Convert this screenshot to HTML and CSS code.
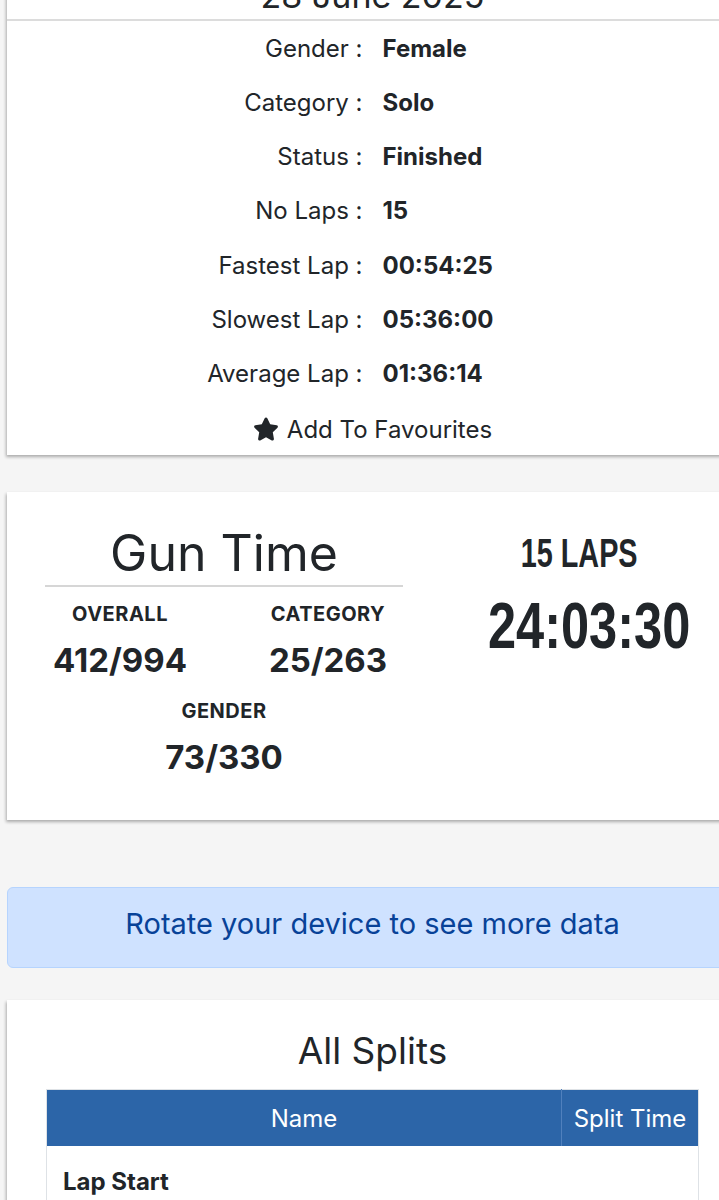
FILE: index.html
```html
<!DOCTYPE html>
<html lang="en">
<head>
<meta charset="utf-8">
<title>Result</title>
<link rel="stylesheet" href="styles.css">
</head>
<body>
<div class="page">
  <section class="card card-info">
    <h2 class="date">28 June 2025</h2>
    <div class="info-row"><span class="label">Gender :</span><span class="value">Female</span></div>
    <div class="info-row"><span class="label">Category :</span><span class="value">Solo</span></div>
    <div class="info-row"><span class="label">Status :</span><span class="value">Finished</span></div>
    <div class="info-row"><span class="label">No Laps :</span><span class="value">15</span></div>
    <div class="info-row"><span class="label">Fastest Lap :</span><span class="value">00:54:25</span></div>
    <div class="info-row"><span class="label">Slowest Lap :</span><span class="value">05:36:00</span></div>
    <div class="info-row"><span class="label">Average Lap :</span><span class="value">01:36:14</span></div>
    <div class="fav-row">
      <svg class="star" viewBox="0 0 576 512" aria-hidden="true"><path d="M316.9 18C311.6 7 300.4 0 288.1 0s-23.4 7-28.8 18L195 150.3 51.4 171.5c-12 1.8-22 10.2-25.7 21.7s-.7 24.2 7.9 32.7L137.8 329 113.2 474.7c-2 12 3 24.2 12.9 31.3s23 8 33.8 2.3l128.3-68.5 128.3 68.5c10.8 5.7 23.9 4.9 33.8-2.3s14.9-19.3 12.9-31.3L438.5 329 542.7 225.9c8.6-8.5 11.7-21.2 7.9-32.7s-13.7-19.9-25.7-21.7L381.2 150.3 316.9 18z"/></svg>
      <span>Add To Favourites</span>
    </div>
  </section>

  <section class="card card-time">
    <div class="gun">
      <h3 class="gun-title">Gun Time</h3>
      <div class="stats">
        <div class="stat"><div class="stat-label">OVERALL</div><div class="stat-value">412/994</div></div>
        <div class="stat"><div class="stat-label">CATEGORY</div><div class="stat-value">25/263</div></div>
        <div class="stat"><div class="stat-label">GENDER</div><div class="stat-value">73/330</div></div>
      </div>
    </div>
    <div class="laps">
      <div class="laps-count">15 LAPS</div>
      <div class="laps-time">24:03:30</div>
    </div>
  </section>

  <div class="alert">Rotate your device to see more data</div>

  <section class="card card-splits">
    <h3 class="splits-title">All Splits</h3>
    <table class="splits">
      <thead>
        <tr><th class="col-name">Name</th><th class="col-time">Split Time</th></tr>
      </thead>
      <tbody>
        <tr><td class="row-name">Lap Start</td><td></td></tr>
      </tbody>
    </table>
  </section>
</div>
</body>
</html>
```

FILE: styles.css
```css
html, body {
  overflow: hidden;
}
body {
  margin: 0;
  background: #f5f5f5;
  font-family: Inter, "Liberation Sans", sans-serif;
  color: #212529;
}
.page {
  width: 745px;
  padding: 0 7px;
  box-sizing: border-box;
  margin-top: -23px;
}
.card {
  background: #fff;
  box-shadow: -1px 2px 3px rgba(0, 0, 0, 0.3);
}

/* info card */
.date {
  margin: 0;
  font-size: 34px;
  font-weight: 400;
  line-height: 38px;
  text-align: center;
  padding-bottom: 4px;
  border-bottom: 2px solid #dcdcdc;
}
.info-row {
  display: grid;
  grid-template-columns: 1fr 1fr;
  column-gap: 20px;
  height: 54.25px;
  align-items: center;
  font-size: 24px;
}
.label {
  text-align: right;
}
.value {
  font-weight: 700;
}
.fav-row {
  height: 54.25px;
  display: flex;
  align-items: center;
  justify-content: center;
  gap: 8px;
  font-size: 24px;
  padding-top: 3px;
  box-sizing: border-box;
}
.star {
  width: 26px;
  height: 24px;
  fill: #212529;
}

/* time card */
.card-time {
  margin-top: 37px;
  height: 328px;
  box-sizing: border-box;
  padding: 31px 39px 0 38px;
  display: flex;
}
.gun {
  width: 358px;
  flex-shrink: 0;
}
.gun-title {
  margin: 0;
  font-size: 50px;
  font-weight: 400;
  line-height: 60px;
  text-align: center;
  padding-bottom: 2px;
  border-bottom: 2px solid #d6d6d6;
}
.stats {
  display: flex;
  flex-wrap: wrap;
  justify-content: center;
  column-gap: 58px;
  row-gap: 20px;
  padding-top: 15px;
}
.stat {
  width: 150px;
  text-align: center;
}
.stat-label {
  font-size: 20px;
  font-weight: 700;
  line-height: 24px;
  letter-spacing: 0.5px;
}
.stat-value {
  font-size: 33px;
  font-weight: 700;
  line-height: 38px;
  margin-top: 15px;
}
.laps {
  flex: 1;
  min-width: 0;
  padding-left: 66px;
  display: flex;
  flex-direction: column;
  align-items: center;
  font-family: "Liberation Sans", sans-serif;
  font-weight: 700;
  white-space: nowrap;
}
.laps-count {
  font-size: 40px;
  line-height: 44px;
  margin-top: 8px;
  margin-right: 10px;
  transform: scaleX(0.72);
}
.laps-time {
  font-size: 64px;
  line-height: 76px;
  margin-top: 13px;
  margin-left: 10px;
  transform: scaleX(0.79);
}

/* alert */
.alert {
  margin-top: 67px;
  height: 81px;
  box-sizing: border-box;
  display: flex;
  align-items: center;
  justify-content: center;
  padding-bottom: 8px;
  background: #cfe2ff;
  border: 1px solid #b6d4fe;
  border-radius: 6px;
  color: #084298;
  font-size: 29px;
}

/* splits */
.card-splits {
  margin-top: 32px;
  padding: 26px 39px 0 39px;
  height: 300px;
}
.splits-title {
  margin: 0 0 13px;
  font-size: 37px;
  font-weight: 400;
  line-height: 50px;
  text-align: center;
}
.splits {
  width: 100%;
  border-collapse: collapse;
  border: 1px solid #dee2e6;
  font-size: 24px;
}
.splits th {
  background: #2c65a8;
  color: #fff;
  font-weight: 400;
  height: 56px;
  padding: 0 11px;
  text-align: center;
  border-right: 1px solid #5080bd;
}
.splits th:last-child {
  border-right: none;
}
.col-time {
  width: 114px;
}
.splits td {
  height: 70px;
  padding: 0 16px;
}
.row-name {
  font-weight: 700;
}
```
